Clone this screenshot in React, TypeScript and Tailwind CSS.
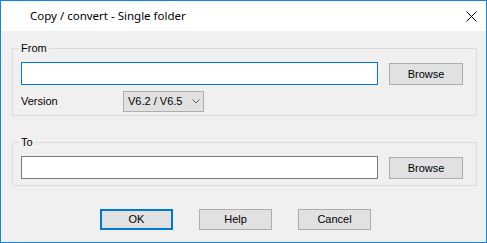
const Button = ({ label, primary }: { label: string; primary?: boolean }) => (
  <button
    className={
      primary
        ? "w-[73px] h-[21px] border-2 border-[#0078d7] bg-[#e1e1e1] text-[11px] text-black leading-none"
        : "w-[73px] h-[21px] border border-[#adadad] bg-[#e1e1e1] text-[11px] text-black leading-none"
    }
  >
    {label}
  </button>
);

const BrowseButton = () => (
  <button className="ml-[11px] mt-[1px] w-[74px] h-[22px] border border-[#adadad] bg-[#e1e1e1] text-[11px] text-black leading-none">
    Browse
  </button>
);

const App = () => {
  return (
    <div
      className="w-[487px] h-[243px] border border-[#1883d7] bg-[#f0f0f0] flex flex-col overflow-hidden text-black"
      style={{ fontFamily: '"Liberation Sans", Arial, sans-serif' }}
    >
      <div className="h-[30px] bg-white flex items-center pl-[29px] shrink-0">
        <span className="text-[11.5px] leading-none" style={{ fontFamily: '"Noto Sans", sans-serif' }}>
          Copy / convert - Single folder
        </span>
        <svg className="ml-auto mr-[9px]" width="11" height="11" viewBox="0 0 11 11">
          <path d="M0.5 0.5 L10.5 10.5 M10.5 0.5 L0.5 10.5" stroke="#000" strokeWidth="1" fill="none" />
        </svg>
      </div>

      <div className="px-[11px] pt-[9px] flex flex-col">
        <fieldset className="w-[465px] border border-[#dcdcdc] pl-[8px] pt-[6px] pb-[3px]">
          <legend className="-ml-[2px] px-[2px] text-[11px] leading-[16px]">From</legend>
          <div className="flex items-start">
            <div className="w-[357px] h-[23px] border border-[#0078d7] bg-white" />
            <BrowseButton />
          </div>
          <div className="mt-[6px] flex items-center">
            <span className="w-[102px] text-[11px]">Version</span>
            <div className="w-[81px] h-[21px] border border-[#adadad] bg-[#e1e1e1] flex items-center pl-[4px] pr-[3px]">
              <span className="text-[11px] leading-none">V6.2 / V6.5</span>
              <svg className="ml-auto" width="8" height="5" viewBox="0 0 8 5">
                <path d="M0.5 0.5 L4 4 L7.5 0.5" stroke="#606060" strokeWidth="1" fill="none" />
              </svg>
            </div>
          </div>
        </fieldset>

        <fieldset className="mt-[18px] w-[465px] border border-[#dcdcdc] pl-[8px] pt-[6px] pb-[6px]">
          <legend className="-ml-[2px] px-[2px] text-[11px] leading-[16px]">To</legend>
          <div className="flex items-start">
            <div className="w-[357px] h-[23px] border border-[#7a7a7a] bg-white" />
            <BrowseButton />
          </div>
        </fieldset>

        <div className="mt-[23px] ml-[88px] flex gap-[26px]">
          <Button label="OK" primary />
          <Button label="Help" />
          <Button label="Cancel" />
        </div>
      </div>
    </div>
  );
};

export default App;
